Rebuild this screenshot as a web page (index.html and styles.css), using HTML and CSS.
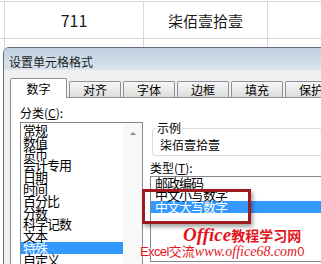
FILE: index.html
```html
<!DOCTYPE html>
<html lang="zh-CN">
<head>
<meta charset="utf-8">
<title>设置单元格格式</title>
<link rel="stylesheet" href="styles.css">
</head>
<body>
<div class="sheet">
  <div class="row row1">
    <div class="cell c0"></div>
    <div class="cell c1 num">711</div>
    <div class="cell c2">柒佰壹拾壹</div>
    <div class="cell c3"></div>
  </div>
  <div class="row row2">
    <div class="cell c0"></div>
    <div class="cell c1"></div>
    <div class="cell c2"></div>
    <div class="cell c3"></div>
  </div>
</div>

<div class="dialog">
  <div class="titlebar">设置单元格格式</div>
  <div class="client">
    <div class="tabs">
      <div class="tab active">数字</div>
      <div class="tab">对齐</div>
      <div class="tab">字体</div>
      <div class="tab">边框</div>
      <div class="tab">填充</div>
      <div class="tab">保护</div>
    </div>
    <div class="panel">
      <div class="left">
        <div class="label">分类(<u>C</u>):</div>
        <div class="catlist">
          <div class="items">
            <div class="item">常规</div>
            <div class="item">数值</div>
            <div class="item">货币</div>
            <div class="item">会计专用</div>
            <div class="item">日期</div>
            <div class="item">时间</div>
            <div class="item">百分比</div>
            <div class="item">分数</div>
            <div class="item">科学记数</div>
            <div class="item">文本</div>
            <div class="item sel">特殊</div>
            <div class="item">自定义</div>
          </div>
          <div class="scroll"><span class="arrow"></span></div>
        </div>
      </div>
      <div class="right">
        <fieldset class="sample">
          <legend>示例</legend>
          <div class="sampletext">柒佰壹拾壹</div>
        </fieldset>
        <div class="typelabel">类型(<u>T</u>):</div>
        <div class="typelist">
          <div class="titem">邮政编码</div>
          <div class="titem">中文小写数字</div>
          <div class="titem sel">中文大写数字</div>
        </div>
      </div>
    </div>
  </div>
</div>

<div class="mark"></div>

<div class="wm">
  <div class="wm1"><span class="en">Office</span><span class="cn">教程学习网</span></div>
  <div class="wm2"><span class="xl">Excel</span><span class="jl">交流</span><span class="url">www.office68.com</span><span class="xl">0</span></div>
</div>
</body>
</html>
```

FILE: styles.css
```css
body {
  margin: 0;
  width: 321px;
  height: 264px;
  overflow: hidden;
  position: relative;
  background: #fff;
  font-family: "Noto Sans CJK SC", sans-serif;
  color: #000;
}

.sheet {
  padding-top: 1px;
}

.row {
  display: flex;
  box-sizing: border-box;
}

.row1 {
  height: 38px;
  border-top: 1px solid #d5d9de;
  border-bottom: 1px solid #d5d9de;
}

.row2 {
  height: 40px;
}

.cell {
  box-sizing: border-box;
  border-right: 1px solid #d5d9de;
  display: flex;
  align-items: center;
  justify-content: center;
  font-size: 15px;
  color: #1a1a1a;
}

.cell.num {
  font-size: 16px;
}

.c0 { width: 5px; }
.c1 { width: 139px; }
.c2 { width: 124px; }
.c3 { flex: 1; border-right: none; }

.dialog {
  position: absolute;
  left: 3px;
  top: 47px;
  width: 340px;
  height: 232px;
  box-sizing: border-box;
  border: 1px solid #5f6c7b;
  border-radius: 6px 6px 0 0;
  background: #f0f0f0;
  overflow: hidden;
}

.titlebar {
  height: 22px;
  box-sizing: border-box;
  padding: 6px 0 0 5px;
  font-size: 12px;
  line-height: 16px;
  color: #1b1b1b;
  background: linear-gradient(#c0d0e1, #dae4ef);
}

.client {
  padding: 8px 0 0 6px;
}

.tabs {
  display: flex;
  align-items: flex-end;
  height: 19px;
}

.tab {
  box-sizing: border-box;
  width: 52px;
  height: 16px;
  margin-left: 2px;
  border: 1px solid #8e9097;
  border-bottom: none;
  border-radius: 2px 2px 0 0;
  background: linear-gradient(#f7f7f7, #dcdcdc);
  font-size: 12px;
  line-height: 15px;
  text-align: center;
  white-space: nowrap;
}

.tab.active {
  width: 57px;
  height: 20px;
  margin-left: 0;
  margin-bottom: -1px;
  padding-top: 2px;
  background: #fff;
  position: relative;
  z-index: 1;
}

.panel {
  display: flex;
  box-sizing: border-box;
  width: 330px;
  height: 180px;
  border: 1px solid #8e9097;
  background: #fff;
}

.left {
  padding: 7px 0 0 9px;
}

.label {
  font-size: 12px;
  line-height: 16px;
  height: 16px;
  white-space: nowrap;
}

.catlist {
  margin-top: 1px;
  width: 123px;
  height: 200px;
  box-sizing: border-box;
  border: 1px solid #828790;
  display: flex;
}

.items {
  flex: 1;
  padding-top: 1px;
}

.item {
  font-size: 13px;
  letter-spacing: -1px;
  line-height: 11.8px;
  height: 11.8px;
  padding-left: 2px;
  white-space: nowrap;
}

.item.sel,
.titem.sel {
  background: #3399ff;
  color: #fff;
}

.scroll {
  width: 19px;
  background: #f8f8f8;
  display: flex;
  justify-content: center;
  padding-top: 9px;
  box-sizing: border-box;
}

.arrow {
  width: 0;
  height: 0;
  border-left: 3px solid transparent;
  border-right: 3px solid transparent;
  border-bottom: 3px solid #8a8a8a;
}

.right {
  margin-left: 7px;
  padding-top: 24px;
}

.sample {
  margin: 0 0 0 2px;
  padding: 0 0 0 7px;
  min-width: 0;
  width: 200px;
  height: 34px;
  box-sizing: border-box;
  border: 1px solid #d5dfe5;
  border-radius: 3px;
}

.sample legend {
  padding: 0 1px;
  margin-left: -4px;
  font-size: 12px;
  line-height: 12px;
}

.sampletext {
  margin-top: 3px;
  font-size: 12px;
  line-height: 16px;
  white-space: nowrap;
}

.typelabel {
  margin-top: 4px;
  font-size: 12px;
  line-height: 16px;
  height: 16px;
  white-space: nowrap;
}

.typelist {
  box-sizing: border-box;
  width: 200px;
  height: 86px;
  border: 1px solid #828790;
  overflow: hidden;
}

.titem {
  font-size: 13px;
  letter-spacing: -1px;
  line-height: 12px;
  height: 12px;
  padding-left: 4px;
  white-space: nowrap;
}

.mark {
  position: absolute;
  left: 142px;
  top: 189px;
  width: 109px;
  height: 35px;
  box-sizing: border-box;
  border: 3px solid #9e1a1f;
  box-shadow: 2px 3px 4px rgba(0, 0, 0, 0.35);
}

.wm {
  position: absolute;
  left: 140px;
  top: 226px;
  color: #e3161e;
  text-shadow: 0 0 1px #fff, 0 0 2px #fff;
  white-space: nowrap;
}

.wm1 {
  height: 16px;
  line-height: 16px;
  padding-left: 43px;
}

.wm1 .en {
  font-family: "Liberation Serif", serif;
  font-style: italic;
  font-weight: bold;
  font-size: 19px;
}

.wm1 .cn {
  font-weight: bold;
  font-size: 14px;
}

.wm2 {
  height: 14px;
  line-height: 14px;
}

.wm2 .xl {
  font-family: "Liberation Sans", sans-serif;
  font-size: 13px;
  letter-spacing: -0.6px;
}

.wm2 .jl {
  font-size: 13px;
}

.wm2 .url {
  font-family: "Liberation Serif", serif;
  font-style: italic;
  font-size: 14px;
}
```
